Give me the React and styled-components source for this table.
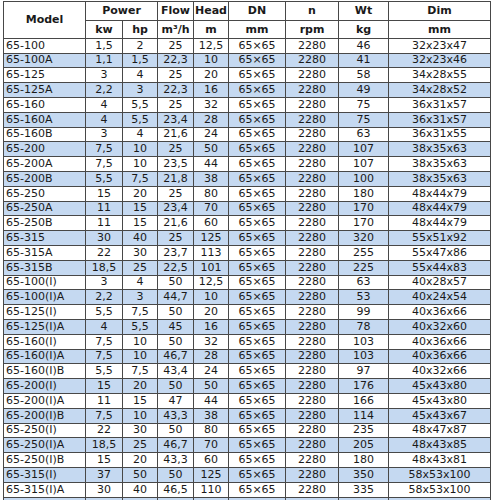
import styled, { createGlobalStyle } from 'styled-components';

const GlobalStyle = createGlobalStyle`
    body {
        margin: 0;
        background: #FFF;
        font-family: "DejaVu Sans", Verdana, sans-serif;
    }
`;

const StyledWrap = styled.div`
    padding: 1px 0 0 3px;
`;

const StyledTable = styled.table`
    border-collapse: collapse;
    table-layout: fixed;
    width: 487px;
    font-size: 11px;
    color: #1A1A1A;
`;

const StyledHeadRow = styled.tr`
    height: ${(props) => props.$height}px;
`;

const StyledHeadCell = styled.th`
    border: 1px solid #484848;
    padding: 0;
    font-weight: bold;
    text-align: center;
    line-height: 13px;
    background-color: #FFF;
`;

const StyledRow = styled.tr`
    height: 14.8px;
    background-color: ${(props) => (props.$shade ? '#C5D9F1' : '#FFF')};
`;

const StyledCell = styled.td`
    border: 1px solid #484848;
    padding: 0 0 0 ${(props) => (props.$left ? '2px' : '0')};
    text-align: ${(props) => (props.$left ? 'left' : 'center')};
    line-height: 12px;
    white-space: nowrap;
    overflow: hidden;
`;

const widths = [82, 37, 35, 36, 35, 57, 53, 50, 102];

const rows = [
    ['65-100', '1,5', '2', '25', '12,5', '46', '32x23x47'],
    ['65-100A', '1,1', '1,5', '22,3', '10', '41', '32x23x46'],
    ['65-125', '3', '4', '25', '20', '58', '34x28x55'],
    ['65-125A', '2,2', '3', '22,3', '16', '49', '34x28x52'],
    ['65-160', '4', '5,5', '25', '32', '75', '36x31x57'],
    ['65-160A', '4', '5,5', '23,4', '28', '75', '36x31x57'],
    ['65-160B', '3', '4', '21,6', '24', '63', '36x31x55'],
    ['65-200', '7,5', '10', '25', '50', '107', '38x35x63'],
    ['65-200A', '7,5', '10', '23,5', '44', '107', '38x35x63'],
    ['65-200B', '5,5', '7,5', '21,8', '38', '100', '38x35x63'],
    ['65-250', '15', '20', '25', '80', '180', '48x44x79'],
    ['65-250A', '11', '15', '23,4', '70', '170', '48x44x79'],
    ['65-250B', '11', '15', '21,6', '60', '170', '48x44x79'],
    ['65-315', '30', '40', '25', '125', '320', '55x51x92'],
    ['65-315A', '22', '30', '23,7', '113', '255', '55x47x86'],
    ['65-315B', '18,5', '25', '22,5', '101', '225', '55x44x83'],
    ['65-100(I)', '3', '4', '50', '12,5', '63', '40x28x57'],
    ['65-100(I)A', '2,2', '3', '44,7', '10', '53', '40x24x54'],
    ['65-125(I)', '5,5', '7,5', '50', '20', '99', '40x36x66'],
    ['65-125(I)A', '4', '5,5', '45', '16', '78', '40x32x60'],
    ['65-160(I)', '7,5', '10', '50', '32', '103', '40x36x66'],
    ['65-160(I)A', '7,5', '10', '46,7', '28', '103', '40x36x66'],
    ['65-160(I)B', '5,5', '7,5', '43,4', '24', '97', '40x32x66'],
    ['65-200(I)', '15', '20', '50', '50', '176', '45x43x80'],
    ['65-200(I)A', '11', '15', '47', '44', '166', '45x43x80'],
    ['65-200(I)B', '7,5', '10', '43,3', '38', '114', '45x43x67'],
    ['65-250(I)', '22', '30', '50', '80', '235', '48x47x87'],
    ['65-250(I)A', '18,5', '25', '46,7', '70', '205', '48x43x85'],
    ['65-250(I)B', '15', '20', '43,3', '60', '180', '48x43x81'],
    ['65-315(I)', '37', '50', '50', '125', '350', '58x53x100'],
    ['65-315(I)A', '30', '40', '46,5', '110', '335', '58x53x100'],
];

const App = () => {
    return (
        <StyledWrap>
            <GlobalStyle />
            <StyledTable>
                <colgroup>
                    {widths.map((w, i) => <col key={i} style={{ width: w }} />)}
                </colgroup>
                <thead>
                    <StyledHeadRow $height={18.5}>
                        <StyledHeadCell rowSpan={2}>Model</StyledHeadCell>
                        <StyledHeadCell colSpan={2}>Power</StyledHeadCell>
                        <StyledHeadCell>Flow</StyledHeadCell>
                        <StyledHeadCell>Head</StyledHeadCell>
                        <StyledHeadCell>DN</StyledHeadCell>
                        <StyledHeadCell>n</StyledHeadCell>
                        <StyledHeadCell>Wt</StyledHeadCell>
                        <StyledHeadCell>Dim</StyledHeadCell>
                    </StyledHeadRow>
                    <StyledHeadRow $height={18.3}>
                        <StyledHeadCell>kw</StyledHeadCell>
                        <StyledHeadCell>hp</StyledHeadCell>
                        <StyledHeadCell>m³/h</StyledHeadCell>
                        <StyledHeadCell>m</StyledHeadCell>
                        <StyledHeadCell>mm</StyledHeadCell>
                        <StyledHeadCell>rpm</StyledHeadCell>
                        <StyledHeadCell>kg</StyledHeadCell>
                        <StyledHeadCell>mm</StyledHeadCell>
                    </StyledHeadRow>
                </thead>
                <tbody>
                    {rows.map((r, i) => (
                        <StyledRow key={r[0]} $shade={i % 2 === 1}>
                            <StyledCell $left>{r[0]}</StyledCell>
                            <StyledCell>{r[1]}</StyledCell>
                            <StyledCell>{r[2]}</StyledCell>
                            <StyledCell>{r[3]}</StyledCell>
                            <StyledCell>{r[4]}</StyledCell>
                            <StyledCell>65×65</StyledCell>
                            <StyledCell>2280</StyledCell>
                            <StyledCell>{r[5]}</StyledCell>
                            <StyledCell>{r[6]}</StyledCell>
                        </StyledRow>
                    ))}
                    <StyledRow $shade>
                        {widths.map((w, i) => <StyledCell key={i} />)}
                    </StyledRow>
                </tbody>
            </StyledTable>
        </StyledWrap>
    );
};

export default App;
